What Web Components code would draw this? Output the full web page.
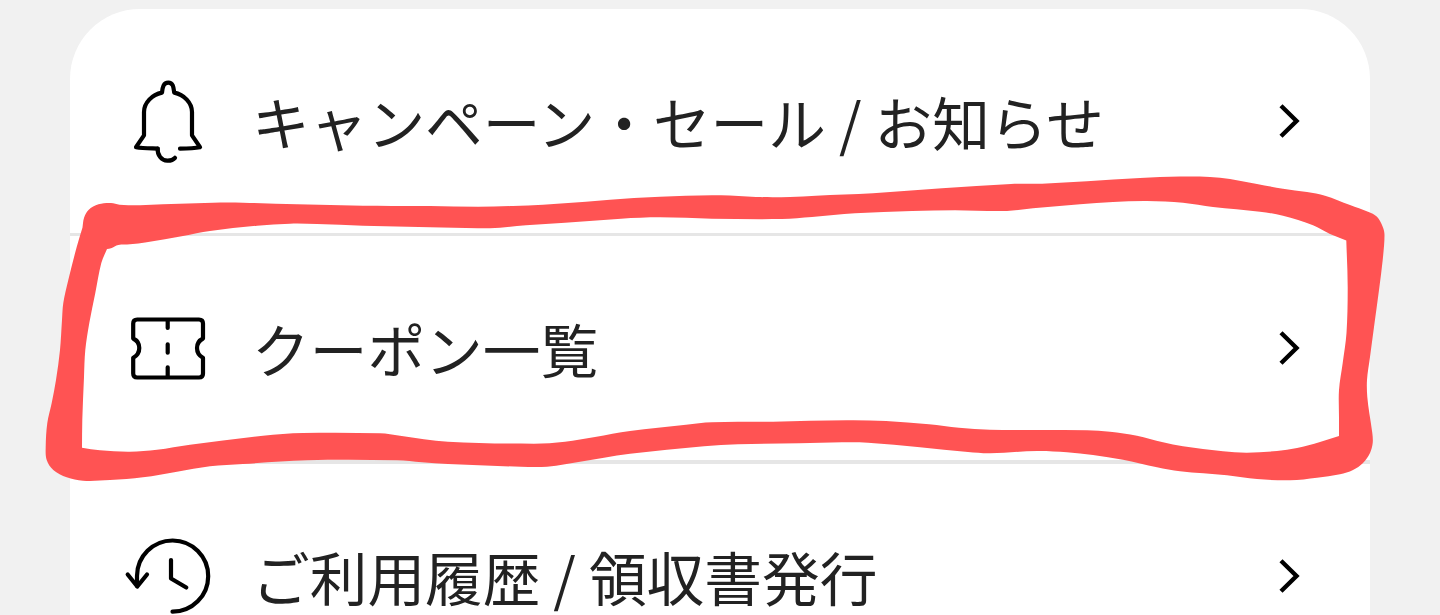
<!DOCTYPE html>
<html lang="ja">
<head>
<meta charset="utf-8">
<title>メニュー</title>
<style>
  body {
    margin: 0;
    height: 615px;
    overflow: hidden;
    background: #f1f1f1;
    color: #222;
    font-family: "Noto Sans CJK JP", sans-serif;
  }

  menu-row {
    height: 228px;
    border-bottom: 4px solid #e6e6e6;
  }

  menu-row:first-child {
    height: 227px;
    padding-bottom: 1px;
    border-bottom-width: 3px;
  }

  menu-row:last-child {
    height: 223px;
    border-bottom: none;
  }
</style>
</head>
<body>
<menu-screen>
  <menu-card>
    <menu-row icon="bell">キャンペーン・セール / お知らせ</menu-row>
    <menu-row icon="ticket">クーポン一覧</menu-row>
    <menu-row icon="history">ご利用履歴 / 領収書発行</menu-row>
  </menu-card>
  <marker-outline slot="overlay"></marker-outline>
</menu-screen>

<script>
class MenuScreen extends HTMLElement {
  constructor() {
    super();
    this.attachShadow({ mode: "open" });
    this.shadowRoot.innerHTML = `
    <style>
      :host {
        display: block;
        position: relative;
        box-sizing: border-box;
        height: 615px;
        padding: 9px 70px 0;
        overflow: hidden;
      }
    </style>
    <slot></slot>
    <slot name="overlay"></slot>
    `;
  }
}

class MenuCard extends HTMLElement {
  constructor() {
    super();
    this.attachShadow({ mode: "open" });
    this.shadowRoot.innerHTML = `
    <style>
      :host {
        display: flex;
        flex-direction: column;
        background: white;
        border-radius: 70px 70px 0 0;
      }
    </style>
    <slot></slot>
    `;
  }
}

// icons are drawn around the centre of an 84px box
const ICONS = {
  bell: `
    <path d="M-10.3 27.6C-16 27.3 -25 27.3 -32 26.2L-24 14.3V-9C-24 -18 -16 -26.5 -6 -28.4C-5.4 -33 -5 -38.4 0.3 -38.4C5.4 -38.4 5.6 -33 6.2 -28.4C16 -26.5 24 -18 24 -9V14.3L32 26.2C26 27.3 19 27.5 12 27.6"/>
    <path d="M-10.3 27.6C-10.8 34 -6.5 39.5 -0.7 39.7C3 39.8 5.5 38.6 7 36.8"/>`,
  ticket: `
    <path d="M-30.8 -28.5H31Q35 -28.5 35 -24.5V-9.5C27 -5.5 27 5.5 35 9.8V25.5Q35 29.5 31 29.5H-30.8Q-34.8 29.5 -34.8 25.5V9.8C-26.7 5.5 -26.7 -5.5 -34.8 -9.5V-24.5Q-34.8 -28.5 -30.8 -28.5Z"/>
    <path d="M-0.3 -28V-20M-0.3 -3.7V4.7M-0.3 19.3V29"/>`,
  history: `
    <path d="M4.5 35.7A35.6 35.6 0 1 0 -31 0V10"/>
    <path d="M-40.3 -1.5L-30.7 10.5L-21 -1.5M3 -16V2.5L18.3 11.5"/>`
};

class MenuRow extends HTMLElement {
  constructor() {
    super();
    this.attachShadow({ mode: "open" });
    this.shadowRoot.innerHTML = `
    <style>
      :host {
        display: flex;
        align-items: center;
        box-sizing: border-box;
        padding: 0 68px 0 56px;
        font-size: 57.7px;
        line-height: 62px;
        white-space: nowrap;
      }

      svg {
        flex: none;
        fill: none;
        stroke: black;
        overflow: visible;
      }

      .icon {
        width: 84px;
        height: 84px;
        stroke-width: 4.2;
        stroke-linecap: round;
        stroke-linejoin: round;
      }

      .label {
        flex: 1;
        margin-left: 42px;
      }

      .chevron {
        width: 24px;
        height: 36px;
        stroke-width: 4.4;
      }
    </style>
    <svg class="icon" viewBox="-42 -42 84 84"></svg>
    <span class="label"><slot></slot></span>
    <svg class="chevron" viewBox="0 0 24 36"><path d="M3 2.8L18.5 18L3 33.2"/></svg>
    `;
  }

  connectedCallback() {
    this.shadowRoot.querySelector(".icon").innerHTML = ICONS[this.getAttribute("icon")];
  }
}

// outer edge of the marker stroke, clockwise from the top left
const OUTER = [
  [82.5,227.5],[84,218],[88.5,210],[98.5,204.3],[111,203],[119.5,204.7],[140,205.3],[163,204.3],
  [213,202.7],[243,202.7],[297,204.3],[363,205.8],[430,206],[478,206.7],[513,206],[543,204.7],
  [586,201.7],[634,198],[686,195.7],[721,195.3],[756,197],[790,197],[816,195.7],[873,193.3],
  [942,188.3],[1011,184],[1042,183.7],[1087,181.3],[1140,178],[1180,176.5],[1210,176.9],
  [1230,179],[1257,184],[1283,188.7],[1307,192],[1325,195.7],[1350,205],[1368,211.7],
  [1377,216.7],[1382.7,226.7],[1384.5,235],[1382.7,260],[1379,290],[1374,327],[1370,357],
  [1367,380],[1367.3,397],[1369.3,413],[1372.3,433],[1372.7,443],[1370,453],[1363,463],
  [1353,470],[1340,474.3],[1317,477.7],[1290,480.3],[1257,479],[1227,475.3],[1180,471.3],
  [1157,467.3],[1123,459.7],[1093,455],[1067,452.3],[1037,451],[990,453.3],[968,452],
  [920,447.3],[868,442.7],[842,442.3],[799,443.3],[738,444.3],[704,446.3],[630,453.7],
  [604,457.7],[565,464.3],[547,466.7],[521,466.7],[448,464],[422,462.3],[397,460.3],
  [307,460.3],[243,464],[210,466.3],[177,471.7],[143,477.3],[110,480],[83,480.7],
  [66.7,477.3],[53.3,470],[46.7,460],[45.7,447],[47.3,423],[51.7,403],[56,380],[60,350],
  [62,320],[63.3,303],[68.3,280],[76.7,247],[82.5,227.5]
];

// inner edge, one list per side so the corners stay sharp
const INNER = [
  [[107,249],[111,248.3],[118.3,245],[130,244.3],[146.7,242.3],[183,236],[210,231],[257,225.7],
   [290,223.7],[317,224],[363,225.7],[430,227.3],[478,228.3],[500,227.7],[526,225.3],
   [565,222.7],[621,218.7],[660,217.3],[712,218.7],[782,219],[812,217],[855,213.3],
   [912,211],[955,210.3],[1007,211],[1033,208.3],[1080,204.3],[1113,202],[1147,201],
   [1183,202.7],[1213,207],[1260,211.7],[1283,215.7],[1313,225.3],[1330,234],[1346.3,240.5]],
  [[1346.3,240.5],[1347.7,287],[1346.5,333],[1342.7,363],[1339,390],[1339,417],[1339,436]],
  [[1339,436],[1320,442],[1297,448],[1277,451],[1247,452.7],[1223,451.3],[1183,446.3],
   [1163,442.3],[1137,435.7],[1110,431.7],[1087,430.3],[1040,430],[990,429.7],[959,427.7],
   [929,424.3],[886,421],[847,420.3],[773,421.7],[712,422.3],[686,424.7],[630,431],
   [595,437],[565,441.7],[534,443.7],[448,441.7],[400,435.7],[380,433.3],[303,433],
   [263,435.7],[190,444.7],[157,449.7],[130,451.7],[100,450.3],[82,447.7]],
  [[82,447.7],[82.3,420],[84,377],[85.3,350],[89.3,323],[95.3,293],[101.3,263],[107,249]]
];

class MarkerOutline extends HTMLElement {
  constructor() {
    super();
    this.attachShadow({ mode: "open" });
    this.shadowRoot.innerHTML = `
    <style>
      :host {
        display: block;
        position: absolute;
        inset: 0;
        pointer-events: none;
      }

      svg {
        display: block;
      }
    </style>
    <svg width="1440" height="615"><path fill="#ff5353" fill-rule="evenodd"/></svg>
    `;
  }

  connectedCallback() {
    const outer = this._start(OUTER) + this._curve(OUTER) + "Z";
    const inner = this._start(INNER[0]) + INNER.map(this._curve).join("") + "Z";
    this.shadowRoot.querySelector("path").setAttribute("d", outer + inner);
  }

  _start(points) {
    return "M" + points[0];
  }

  // smooth curve through all the points
  _curve(points) {
    let d = "";
    for (let i = 0; i < points.length - 1; i++) {
      const b = points[i];
      const c = points[i + 1];
      const a = points[i - 1] || b;
      const e = points[i + 2] || c;
      const len = Math.hypot(c[0] - b[0], c[1] - b[1]);
      const tangent = (p, q) => {
        const l = Math.hypot(q[0] - p[0], q[1] - p[1]);
        return [(q[0] - p[0]) / l * len / 3, (q[1] - p[1]) / l * len / 3];
      };
      const t1 = tangent(a, c);
      const t2 = tangent(b, e);
      d += `C${b[0] + t1[0]} ${b[1] + t1[1]} ${c[0] - t2[0]} ${c[1] - t2[1]} ${c[0]} ${c[1]}`;
    }
    return d;
  }
}

customElements.define("menu-screen", MenuScreen);
customElements.define("menu-card", MenuCard);
customElements.define("menu-row", MenuRow);
customElements.define("marker-outline", MarkerOutline);
</script>
</body>
</html>
